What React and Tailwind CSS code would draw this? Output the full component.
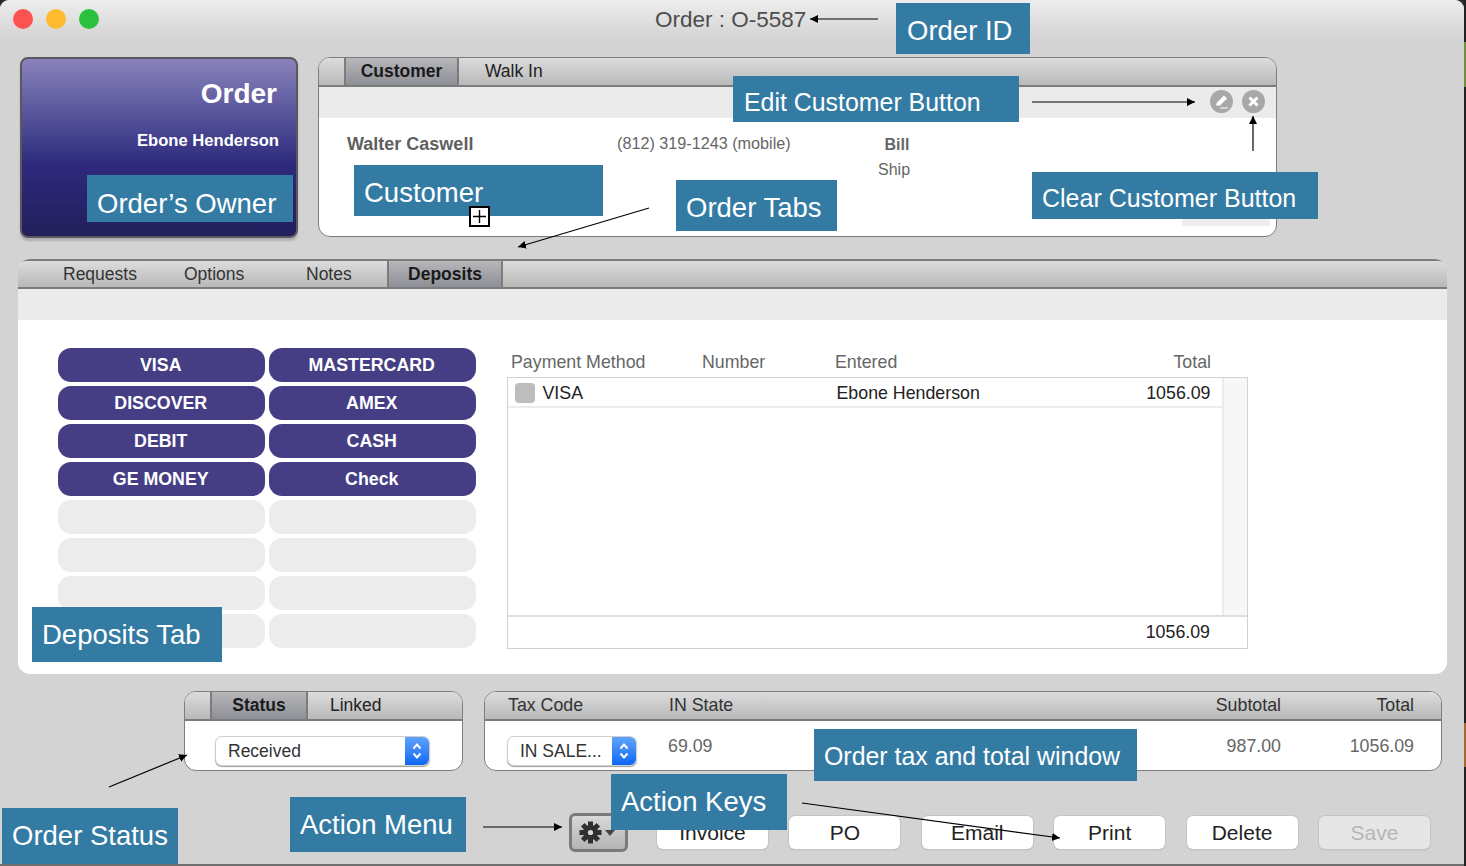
import React from "react";

const FONT = "font-['Liberation_Sans',Arial,sans-serif]";

function Callout({ className, children }) {
  return (
    <div className={"absolute flex items-center whitespace-nowrap bg-[#347ba4] pl-[10px] leading-none text-white " + className}>
      {children}
    </div>
  );
}

function Annotations() {
  const lines = [
    [878, 19, 810, 19],
    [1032, 102, 1195, 102],
    [1253, 151, 1253, 116],
    [649, 208, 518, 247],
    [109, 787, 187, 755],
    [483, 827, 562, 827],
    [802, 803, 1060, 838],
  ];
  return (
    <>
      <svg className="pointer-events-none absolute left-0 top-0" width="1466" height="866">
        <defs>
          <marker id="arrow" markerUnits="userSpaceOnUse" markerWidth="9" markerHeight="9" refX="8" refY="4" orient="auto">
            <path d="M0 0 L8 4 L0 8 Z" fill="#000" />
          </marker>
        </defs>
        {lines.map((l, i) => (
          <line key={i} x1={l[0]} y1={l[1]} x2={l[2]} y2={l[3]} stroke="#000" strokeWidth="1.2" markerEnd="url(#arrow)" />
        ))}
      </svg>
      <Callout className="left-[896px] top-[3px] h-[51px] w-[134px] pl-[11px] pt-[5px] text-[27.5px]">Order ID</Callout>
      <Callout className="left-[733px] top-[76px] h-[46px] w-[286px] pl-[11px] pt-[6px] text-[24.9px]">Edit Customer Button</Callout>
      <Callout className="left-[354px] top-[165px] h-[51px] w-[249px] pt-[5px] text-[27.5px]">Customer</Callout>
      <Callout className="left-[676px] top-[180px] h-[51px] w-[161px] pt-[5px] text-[27.5px]">Order Tabs</Callout>
      <Callout className="left-[1032px] top-[172px] h-[47px] w-[286px] pt-[6px] text-[25px]">Clear Customer Button</Callout>
      <Callout className="left-[87px] top-[175px] h-[47px] w-[206px] pt-[10px] text-[27.5px]">Order’s Owner</Callout>
      <Callout className="left-[32px] top-[607px] h-[55px] w-[190px] text-[27.5px]">Deposits Tab</Callout>
      <Callout className="left-[814px] top-[729px] h-[52px] w-[323px] pt-[3px] text-[24.9px]">Order tax and total window</Callout>
      <Callout className="left-[611px] top-[774px] h-[56px] w-[176px] text-[27.5px]">Action Keys</Callout>
      <Callout className="left-[2px] top-[808px] h-[56px] w-[176px] text-[27.5px]">Order Status</Callout>
      <Callout className="left-[290px] top-[797px] h-[55px] w-[176px] text-[27.5px]">Action Menu</Callout>
      <div className="absolute left-[469px] top-[206px] flex h-[21px] w-[21px] items-center justify-center border-2 border-black bg-white">
        <svg width="15" height="15" viewBox="0 0 15 15">
          <path d="M7.5 1 V14 M1 7.5 H14" stroke="#000" strokeWidth="1.4" />
        </svg>
      </div>
    </>
  );
}

const HEAD = "shrink-0 border-b-2 border-[#7c7c7c] bg-gradient-to-b from-[#dcdcdc] to-[#b9b9b9]";
const PANEL = "overflow-hidden border-[1.5px] border-[#7d7d7d] bg-white";
const ACTIVE = "flex h-full items-center justify-center border-x-2 border-[#7c7c7c] bg-gradient-to-b from-[#b7b7ba] to-[#8e9097] font-bold text-[#1a1a1a]";

function TitleBar() {
  return (
    <div className="relative flex h-[57px] shrink-0 items-start bg-gradient-to-b from-[#ededed] to-[#d3d3d3] to-[70%] pl-[13px] pt-[9px]">
      <div className="flex gap-[13px]">
        <span className="h-[20px] w-[20px] rounded-full bg-[#fc5350]" />
        <span className="h-[20px] w-[20px] rounded-full bg-[#fdbb2d]" />
        <span className="h-[20px] w-[20px] rounded-full bg-[#2ac13f]" />
      </div>
      <div className="ml-[556px] mt-[-1px] text-[22.5px] leading-[24px] text-[#4d4d4d]">Order : O-5587</div>
    </div>
  );
}

function OrderCard() {
  return (
    <div className="flex h-[181px] w-[278px] shrink-0 flex-col items-end rounded-[8px] border-2 border-[#5a5a5e] bg-gradient-to-b from-[#8a82bb] via-[#2e297c] via-[60%] to-[#231e5b] pr-[17px] pt-[17px] text-white shadow-[0_3px_2px_#b0b0b0]">
      <div className="pr-[2px] text-[28px] font-bold leading-[36px]">Order</div>
      <div className="mt-[18px] text-[16.6px] font-bold leading-[22px]">Ebone Henderson</div>
    </div>
  );
}

function CustomerPanel() {
  return (
    <div className={"ml-[20px] flex h-[180px] w-[959px] flex-col rounded-[12px] " + PANEL}>
      <div className={"flex h-[29px] items-center text-[17.5px] text-[#222] " + HEAD}>
        <div className={"ml-[25px] w-[115px] " + ACTIVE}>Customer</div>
        <div className="ml-[26px]">Walk In</div>
      </div>
      <div className="flex h-[31px] shrink-0 items-center justify-end gap-[9px] bg-[#ebebeb] pb-[2px] pr-[11.5px]">
        <svg width="23" height="23" viewBox="0 0 23 23">
          <circle cx="11.5" cy="11.5" r="11.5" fill="#a8a8a8" />
          <path d="M6 15.5 L7 12.5 L14 5.5 L17 8.5 L10 15.5 Z" fill="#fff" />
          <path d="M10 18 H18" stroke="#fff" strokeWidth="1.2" />
        </svg>
        <svg width="23" height="23" viewBox="0 0 23 23">
          <circle cx="11.5" cy="11.5" r="11.5" fill="#a8a8a8" />
          <path d="M7.5 7.5 L15.5 15.5 M15.5 7.5 L7.5 15.5" stroke="#fff" strokeWidth="3" />
        </svg>
      </div>
      <div className="relative flex flex-1 pl-[28px] pt-[14px]">
        <div className="w-[270px] text-[18px] font-bold leading-[24px] text-[#5f5f5f]">Walter Caswell</div>
        <div className="w-[261px] text-[16.2px] leading-[22px] text-[#666]">(812) 319-1243 (mobile)</div>
        <div className="flex flex-col items-center text-[16px] leading-[25px] text-[#666]">
          <span className="ml-[6px] font-bold">Bill</span>
          <span>Ship</span>
        </div>
        <div className="absolute bottom-[10px] right-[6px] h-[10px] w-[88px] bg-[#eeeeee]" />
      </div>
    </div>
  );
}

const METHODS = ["VISA", "MASTERCARD", "DISCOVER", "AMEX", "DEBIT", "CASH", "GE MONEY", "Check"];

function MethodGrid() {
  return (
    <div className="grid w-[418px] shrink-0 grid-cols-2 content-start gap-x-[4px] gap-y-[4px] self-start">
      {METHODS.map((m) => (
        <div key={m} className="flex h-[34px] items-center justify-center rounded-[13px] bg-[#453e85] pr-[1.5px] text-[17.8px] font-bold text-white">
          {m}
        </div>
      ))}
      {Array.from({ length: 8 }).map((_, i) => (
        <div key={i} className="h-[34px] rounded-[13px] bg-[#ececec]" />
      ))}
    </div>
  );
}

function PaymentTable() {
  return (
    <div className="ml-[31px] w-[741px] shrink-0">
      <div className="flex h-[29px] items-start text-[17.8px] leading-[29px] text-[#666]">
        <div className="ml-[4px] w-[191px]">Payment Method</div>
        <div className="w-[133px]">Number</div>
        <div className="w-[250px]">Entered</div>
        <div className="w-[126px] text-right">Total</div>
      </div>
      <div className="flex h-[272px] flex-col border-[1.5px] border-[#d2d2d2]">
        <div className="flex flex-1">
          <div className="flex-1">
            <div className="flex h-[30px] items-center border-b-2 border-[#ececec] pt-[2px] text-[17.8px] text-[#222]">
              <span className="ml-[6.5px] h-[20px] w-[20px] rounded-[4px] bg-[#bdbdbd]" />
              <span className="ml-[8px] w-[294px]">VISA</span>
              <span className="w-[245px]">Ebone Henderson</span>
              <span className="w-[129px] text-right">1056.09</span>
            </div>
          </div>
          <div className="w-[25px] border-l-2 border-[#ebebeb] bg-[#f7f7f7]" />
        </div>
        <div className="flex h-[33px] shrink-0 items-center justify-end border-t-2 border-[#dedede] pr-[37px] text-[17.8px] text-[#222]">1056.09</div>
      </div>
    </div>
  );
}

function DepositsPanel() {
  return (
    <div className="ml-[18px] mt-[21px] flex h-[415px] w-[1429px] flex-col overflow-hidden rounded-[12px] bg-white">
      <div className={"flex h-[30px] items-center rounded-t-[8px] border-t-2 text-[17.5px] text-[#333] " + HEAD}>
        <div className="ml-[45px] w-[121px]">Requests</div>
        <div className="w-[122px]">Options</div>
        <div className="w-[81px]">Notes</div>
        <div className={"w-[116px] " + ACTIVE}>Deposits</div>
      </div>
      <div className="h-[31px] shrink-0 bg-[#ebebeb]" />
      <div className="flex flex-1 pl-[40px] pt-[28px]">
        <MethodGrid />
        <PaymentTable />
      </div>
    </div>
  );
}

function Select({ className, label }) {
  return (
    <div className={"flex h-[30px] items-stretch overflow-hidden rounded-[7px] border border-[#cfcfcf] bg-white shadow-[0_1px_1px_#9f9f9f] " + className}>
      <div className="min-w-0 flex-1 whitespace-nowrap pl-[12.5px] text-[17.5px] leading-[28px] text-[#333]">{label}</div>
      <div className="flex w-[24px] shrink-0 items-center justify-center bg-gradient-to-b from-[#5ea2f9] to-[#0a66f5]">
        <svg width="12" height="20" viewBox="0 0 12 20" fill="none" stroke="#fff" strokeWidth="2">
          <path d="M2.5 7.5 L6 3.5 L9.5 7.5 M2.5 12.5 L6 16.5 L9.5 12.5" />
        </svg>
      </div>
    </div>
  );
}

function StatusPanel() {
  return (
    <div className={"ml-[184px] flex h-[80px] w-[279px] shrink-0 flex-col rounded-[12px] " + PANEL}>
      <div className={"flex h-[29px] items-center text-[17.5px] text-[#222] " + HEAD}>
        <div className={"ml-[25px] w-[98px] " + ACTIVE}>Status</div>
        <div className="ml-[22px]">Linked</div>
      </div>
      <div className="pl-[29.5px] pt-[14.5px]">
        <Select className="w-[215px]" label="Received" />
      </div>
    </div>
  );
}

function TaxPanel() {
  return (
    <div className={"ml-[21px] flex h-[80px] w-[958px] shrink-0 flex-col rounded-[12px] " + PANEL}>
      <div className={"flex h-[29px] items-center text-[17.8px] text-[#333] " + HEAD}>
        <div className="ml-[23px] w-[161px] shrink-0">Tax Code</div>
        <div className="w-[100px] shrink-0">IN State</div>
        <div className="ml-[312px] w-[200px] shrink-0 text-right">Subtotal</div>
        <div className="w-[133px] shrink-0 text-right">Total</div>
      </div>
      <div className="flex pt-[14.5px] text-[17.8px] leading-[22px] text-[#666]">
        <Select className="ml-[21.5px] w-[130px] shrink-0" label="IN SALE..." />
        <div className="ml-[31.5px] mt-[-1px] w-[100px] shrink-0">69.09</div>
        <div className="ml-[313px] mt-[-1px] w-[200px] shrink-0 text-right">987.00</div>
        <div className="mt-[-1px] w-[133px] shrink-0 text-right">1056.09</div>
      </div>
    </div>
  );
}

function ActionButton({ children, disabled }) {
  return (
    <div
      className={
        "flex h-[33px] w-[111px] items-center justify-center rounded-[6px] text-[21px] shadow-[0_0_0_1px_#c4c4c4,0_1px_1px_#999] " +
        (disabled ? "bg-[#e6e6e6] text-[#b5b5b5]" : "bg-white text-[#222]")
      }
    >
      {children}
    </div>
  );
}

function Gear() {
  const teeth = [0, 45, 90, 135, 180, 225, 270, 315];
  return (
    <svg width="23" height="23" viewBox="0 0 23 23">
      {teeth.map((a) => (
        <rect key={a} x="9" y="0.5" width="5" height="6" fill="#303030" transform={`rotate(${a} 11.5 11.5)`} />
      ))}
      <circle cx="11.5" cy="11.5" r="7.5" fill="#303030" />
      <circle cx="11.5" cy="11.5" r="2.6" fill="#d8d8d8" />
    </svg>
  );
}

function ActionBar() {
  return (
    <div className="ml-[569px] mt-[42px] flex items-center">
      <div className="flex h-[39px] w-[59px] items-center justify-center gap-[3px] rounded-[6px] border-[3px] border-[#7a7a7a] bg-gradient-to-b from-[#d8d8d8] to-[#b4b4b4] pr-[4px]">
        <Gear />
        <svg width="10" height="6" viewBox="0 0 10 6"><path d="M0 0 H10 L5 6 Z" fill="#444" /></svg>
      </div>
      <div className="ml-[29px] flex gap-[21.4px]">
        <ActionButton>Invoice</ActionButton>
        <ActionButton>PO</ActionButton>
        <ActionButton>Email</ActionButton>
        <ActionButton>Print</ActionButton>
        <ActionButton>Delete</ActionButton>
        <ActionButton disabled>Save</ActionButton>
      </div>
    </div>
  );
}

function DesktopEdge() {
  return (
    <div className="flex w-[2px] flex-col bg-[#222]">
      <div className="mt-[42px] h-[45px] bg-[#6f8f3a]" />
      <div className="mt-[636px] h-[44px] bg-[#a5682a]" />
    </div>
  );
}

export default function App() {
  return (
    <div className={"relative flex h-[866px] w-[1466px] overflow-hidden bg-[#2b2b2b] " + FONT}>
      <div className="flex h-[866px] w-[1464px] flex-col overflow-hidden rounded-t-[9px] border-b-2 border-[#6f6f6f] bg-[#d3d3d3]">
        <TitleBar />
        <div className="ml-[20px] flex">
          <OrderCard />
          <CustomerPanel />
        </div>
        <DepositsPanel />
        <div className="mt-[17px] flex">
          <StatusPanel />
          <TaxPanel />
        </div>
        <ActionBar />
      </div>
      <DesktopEdge />
      <Annotations />
    </div>
  );
}
